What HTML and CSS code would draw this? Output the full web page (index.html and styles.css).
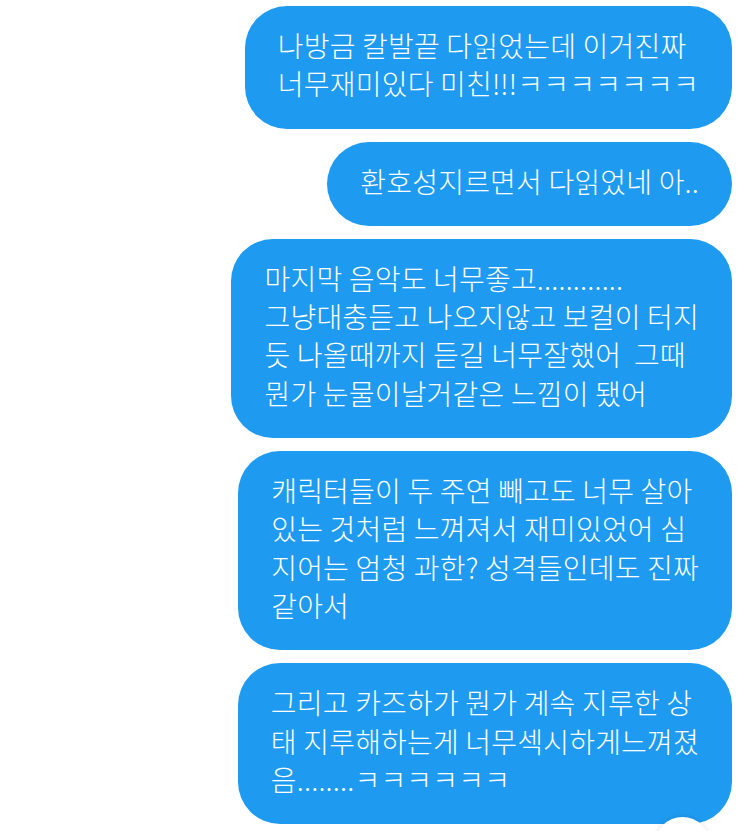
FILE: index.html
```html
<html>
<head>
	<meta charset="utf-8">
	<title>messages</title>
<link rel="stylesheet" href="styles.css">
</head>
<body>

	<div id="thread">
		<div class="bubble">나방금 칼발끝 다읽었는데 이거진짜<br>너무재미있다 미친!!!ㅋㅋㅋㅋㅋㅋㅋ</div>
		<div class="bubble">환호성지르면서 다읽었네 아..</div>
		<div class="bubble">마지막 음악도 너무좋고............<br>그냥대충듣고 나오지않고 보컬이 터지<br>듯 나올때까지 듣길 너무잘했어 &nbsp;그때<br>뭔가 눈물이날거같은 느낌이 됐어</div>
		<div class="bubble">캐릭터들이 두 주연 빼고도 너무 살아<br>있는 것처럼 느껴져서 재미있었어 심<br>지어는 엄청 과한? 성격들인데도 진짜<br>같아서</div>
		<div class="bubble">그리고 카즈하가 뭔가 계속 지루한 상<br>태 지루해하는게 너무섹시하게느껴졌<br>음........ㅋㅋㅋㅋㅋㅋ</div>
	</div>

	<div class="fab"></div>

</body>
</html>
```
FILE: styles.css
```css
body {
	margin: 0;
	background: #fff;
	overflow: hidden;
	font-family: "Noto Sans CJK KR", "Noto Sans", sans-serif;
}

#thread {
	display: flex;
	flex-direction: column;
	align-items: flex-end;
	gap: 13px;
	padding: 6px 18px 0 0;
}

.bubble {
	background: #1e9bf0;
	color: #fff;
	font-size: 28px;
	font-weight: 300;
	letter-spacing: 0.2px;
	line-height: 38.3px;
	padding: 20px 33px 26px;
	border-radius: 42px;
	white-space: nowrap;
}

.fab {
	position: absolute;
	left: 655px;
	top: 817px;
	width: 55px;
	height: 55px;
	border-radius: 50%;
	background: #fff;
	box-shadow: 0 0 6px rgba(0, 0, 0, 0.12);
}
```
